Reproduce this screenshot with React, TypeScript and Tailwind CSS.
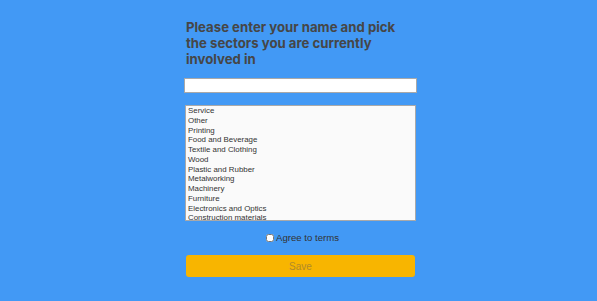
import { FC } from "react";

const sectors = [
    "Service",
    "Other",
    "Printing",
    "Food and Beverage",
    "Textile and Clothing",
    "Wood",
    "Plastic and Rubber",
    "Metalworking",
    "Machinery",
    "Furniture",
    "Electronics and Optics",
    "Construction materials",
    "Transport and Logistics",
];

const App: FC = () => {
    return (
        <div className="min-h-screen w-full bg-[#4299f5] flex justify-center font-['Liberation_Sans',Arial,sans-serif]">
            <form className="w-[233px] ml-[4px] flex flex-col pt-[19px]">
                {/* Title */}
                <h1 className="px-[2px] text-[13.2px] leading-[16px] font-bold text-[#464646] font-['Inter',sans-serif]">
                    Please enter your name and pick the sectors you are currently involved in
                </h1>

                {/* Name */}
                <input
                    type="text"
                    className="mt-[11px] h-[15px] w-full bg-white border border-[#a9a9a9] outline-none"
                />

                {/* Sectors */}
                <div className="mt-[12px] mx-[1px] h-[116px] overflow-hidden bg-[#fafafa] border border-[#a9a9a9]">
                    {sectors.map((s) => (
                        <div key={s} className="px-[2px] text-[7.9px] leading-[9.75px] text-[#333]">
                            {s}
                        </div>
                    ))}
                </div>

                {/* Terms */}
                <label className="mt-[10px] ml-[4px] flex items-center justify-center text-[9.6px] leading-[14px] text-[#333]">
                    <input type="checkbox" className="w-[8px] h-[8px] m-0 mr-[2px]" />
                    Agree to terms
                </label>

                {/* Save */}
                <button
                    type="button"
                    className="mt-[10px] mx-[2px] h-[22px] rounded-[3px] bg-[#f8b500] text-[10px] text-[#b08a2b]"
                >
                    Save
                </button>
            </form>
        </div>
    );
};

export default App;
